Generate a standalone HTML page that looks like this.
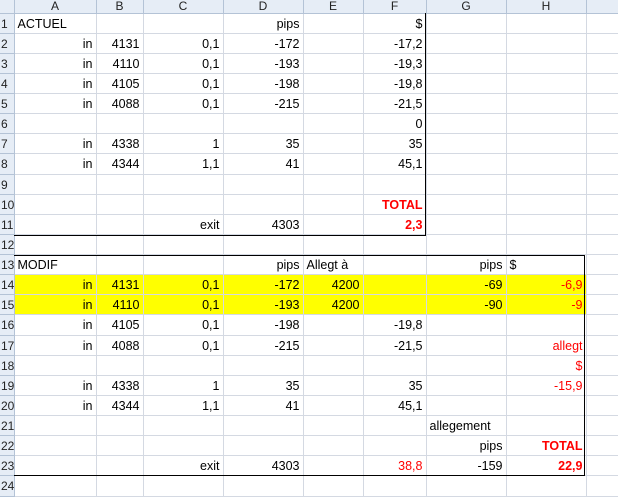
<!DOCTYPE html>
<html><head><meta charset="utf-8"><style>
body{margin:0;background:#fff;width:618px;height:499px;overflow:hidden;position:relative;font-family:"Liberation Sans",Arial,sans-serif;font-size:12.5px;color:#000}
table{border-collapse:collapse;table-layout:fixed;position:absolute;left:0;top:0;width:625px}
td{border-right:1px solid #d4d9e2;border-bottom:1px solid #d4d9e2;padding:1px 3px 0 3px;white-space:nowrap;overflow:visible;text-align:right;height:19px;line-height:18px;box-sizing:border-box}
tr.h td{background:#e6edf6;border-color:#b4c3d6;text-align:center;height:13px;line-height:12px;padding:0;font-size:12px;color:#222}
td.rh{background:#e6edf6;border-color:#b4c3d6;text-align:left;padding:1px 0 0 1px;font-size:12px;color:#222}
.l{text-align:left}
.r{color:#f00}
.b{font-weight:bold}
tr.y td:not(.rh):not(.i){background:#ffff00}
tr.t td{height:21px}
.bx{position:absolute;background:#000}
</style></head><body>
<table>
<colgroup><col style="width:14px"><col style="width:82px"><col style="width:47px"><col style="width:80px"><col style="width:80px"><col style="width:60px"><col style="width:63px"><col style="width:80px"><col style="width:80px"><col style="width:39px"></colgroup>
<tr class="h"><td></td><td>A</td><td>B</td><td>C</td><td>D</td><td>E</td><td>F</td><td>G</td><td>H</td><td></td></tr>
<tr><td class="rh">1</td><td class="l">ACTUEL</td><td></td><td></td><td>pips</td><td></td><td>$</td><td></td><td></td><td></td></tr>
<tr><td class="rh">2</td><td>in</td><td>4131</td><td>0,1</td><td>-172</td><td></td><td>-17,2</td><td></td><td></td><td></td></tr>
<tr><td class="rh">3</td><td>in</td><td>4110</td><td>0,1</td><td>-193</td><td></td><td>-19,3</td><td></td><td></td><td></td></tr>
<tr><td class="rh">4</td><td>in</td><td>4105</td><td>0,1</td><td>-198</td><td></td><td>-19,8</td><td></td><td></td><td></td></tr>
<tr><td class="rh">5</td><td>in</td><td>4088</td><td>0,1</td><td>-215</td><td></td><td>-21,5</td><td></td><td></td><td></td></tr>
<tr><td class="rh">6</td><td></td><td></td><td></td><td></td><td></td><td>0</td><td></td><td></td><td></td></tr>
<tr><td class="rh">7</td><td>in</td><td>4338</td><td>1</td><td>35</td><td></td><td>35</td><td></td><td></td><td></td></tr>
<tr class="t"><td class="rh">8</td><td>in</td><td>4344</td><td>1,1</td><td>41</td><td></td><td>45,1</td><td></td><td></td><td></td></tr>
<tr><td class="rh">9</td><td></td><td></td><td></td><td></td><td></td><td></td><td></td><td></td><td></td></tr>
<tr><td class="rh">10</td><td></td><td></td><td></td><td></td><td></td><td class="r b">TOTAL</td><td></td><td></td><td></td></tr>
<tr><td class="rh">11</td><td></td><td></td><td>exit</td><td>4303</td><td></td><td class="r b">2,3</td><td></td><td></td><td></td></tr>
<tr><td class="rh">12</td><td></td><td></td><td></td><td></td><td></td><td></td><td></td><td></td><td></td></tr>
<tr><td class="rh">13</td><td class="l">MODIF</td><td></td><td></td><td>pips</td><td class="l">Allegt à</td><td></td><td>pips</td><td class="l">$</td><td></td></tr>
<tr class="y"><td class="rh">14</td><td>in</td><td>4131</td><td>0,1</td><td>-172</td><td>4200</td><td></td><td>-69</td><td class="r">-6,9</td><td class="i"></td></tr>
<tr class="y"><td class="rh">15</td><td>in</td><td>4110</td><td>0,1</td><td>-193</td><td>4200</td><td></td><td>-90</td><td class="r">-9</td><td class="i"></td></tr>
<tr class="t"><td class="rh">16</td><td>in</td><td>4105</td><td>0,1</td><td>-198</td><td></td><td>-19,8</td><td></td><td></td><td></td></tr>
<tr><td class="rh">17</td><td>in</td><td>4088</td><td>0,1</td><td>-215</td><td></td><td>-21,5</td><td></td><td class="r">allegt</td><td></td></tr>
<tr><td class="rh">18</td><td></td><td></td><td></td><td></td><td></td><td></td><td></td><td class="r">$</td><td></td></tr>
<tr><td class="rh">19</td><td>in</td><td>4338</td><td>1</td><td>35</td><td></td><td>35</td><td></td><td class="r">-15,9</td><td></td></tr>
<tr><td class="rh">20</td><td>in</td><td>4344</td><td>1,1</td><td>41</td><td></td><td>45,1</td><td></td><td></td><td></td></tr>
<tr><td class="rh">21</td><td></td><td></td><td></td><td></td><td></td><td></td><td class="l">allegement</td><td></td><td></td></tr>
<tr><td class="rh">22</td><td></td><td></td><td></td><td></td><td></td><td></td><td>pips</td><td class="r b">TOTAL</td><td></td></tr>
<tr><td class="rh">23</td><td></td><td></td><td>exit</td><td>4303</td><td></td><td class="r">38,8</td><td>-159</td><td class="r b">22,9</td><td></td></tr>
<tr class="t"><td class="rh">24</td><td></td><td></td><td></td><td></td><td></td><td></td><td></td><td></td><td></td></tr>
</table>
<div class="bx" style="left:425px;top:13px;width:1px;height:223px"></div>
<div class="bx" style="left:14px;top:235px;width:412px;height:1px"></div>
<div class="bx" style="left:14px;top:255px;width:571px;height:1px"></div>
<div class="bx" style="left:584px;top:255px;width:1px;height:221px"></div>
<div class="bx" style="left:14px;top:475px;width:571px;height:1px"></div>
</body></html>
